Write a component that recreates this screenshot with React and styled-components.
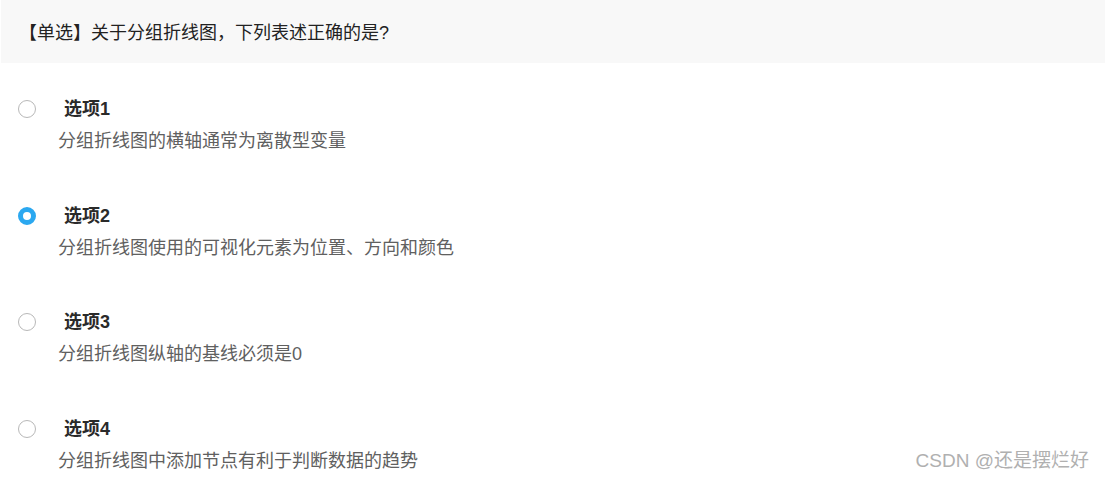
import React from "react"
import styled, { createGlobalStyle } from "styled-components"

const GlobalStyle = createGlobalStyle`
  body {
    margin: 0;
    background: #ffffff;
    font-family: "Liberation Sans", "Noto Sans CJK SC", sans-serif;
  }
`

const options = [
  { label: "选项1", text: "分组折线图的横轴通常为离散型变量" },
  { label: "选项2", text: "分组折线图使用的可视化元素为位置、方向和颜色", checked: true },
  { label: "选项3", text: "分组折线图纵轴的基线必须是0" },
  { label: "选项4", text: "分组折线图中添加节点有利于判断数据的趋势" },
]

function App() {
  return (
    <Page>
      <GlobalStyle />
      <Question>【单选】关于分组折线图，下列表述正确的是?</Question>
      <OptionList>
        {options.map((o) => (
          <Option key={o.label}>
            <OptionHead>
              <Radio checked={o.checked} />
              <OptionLabel>{o.label}</OptionLabel>
            </OptionHead>
            <OptionText>{o.text}</OptionText>
          </Option>
        ))}
      </OptionList>
      <Watermark>CSDN @还是摆烂好</Watermark>
    </Page>
  )
}

export default App

const Page = styled.div`
  position: relative;
  width: 1105px;
  height: 480px;
  overflow: hidden;
`

const Question = styled.div`
  display: flex;
  align-items: center;
  height: 63px;
  margin-left: 1px;
  padding-left: 18px;
  padding-bottom: 1px;
  box-sizing: border-box;
  background: #f8f8f8;
  color: #222;
  font-size: 18px;
`

const OptionList = styled.div`
  display: flex;
  flex-direction: column;
  gap: 48.7px;
  padding-top: 33px;
`

const Option = styled.div`
  display: flex;
  flex-direction: column;
  gap: 6px;
`

const OptionHead = styled.div`
  display: flex;
  align-items: center;
  height: 26px;
  padding-left: 18px;
`

const Radio = styled.span`
  box-sizing: border-box;
  width: 18px;
  height: 18px;
  border-radius: 50%;
  background: #fff;
  border: ${(p) => (p.checked ? "5px solid #2ba8f0" : "1px solid #b8b8b8")};
`

const OptionLabel = styled.span`
  margin-left: 28px;
  font-size: 18px;
  font-weight: bold;
  color: #2a2a2a;
  line-height: 26px;
`

const OptionText = styled.div`
  padding-left: 58px;
  font-size: 18px;
  line-height: 26px;
  color: #606060;
`

const Watermark = styled.div`
  position: absolute;
  right: 16px;
  bottom: 6px;
  font-size: 19px;
  line-height: 26px;
  color: #b0b0b0;
`
